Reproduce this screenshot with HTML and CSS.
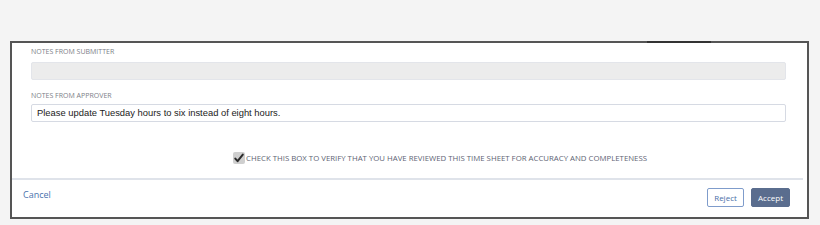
FILE: index.html
```html
<!DOCTYPE html>
<html>
<head>
<meta charset="utf-8">
<link rel="stylesheet" href="styles.css">
</head>
<body>
<div class="frame">
  <span class="tab-mark"></span>
  <div class="fields">
    <div class="label">NOTES FROM SUBMITTER</div>
    <div class="input input-disabled"></div>
    <div class="label label-second">NOTES FROM APPROVER</div>
    <div class="input">Please update Tuesday hours to six instead of eight hours.</div>
  </div>
  <div class="verify">
    <svg class="check" width="12" height="12" viewBox="0 0 12 12">
      <rect x="0" y="0" width="12" height="12" rx="2" fill="#cfcfcf"/>
      <path d="M2.3 6.6 L4.6 9.2 L9.8 2.6" fill="none" stroke="#2a2a2a" stroke-width="2" stroke-linecap="round" stroke-linejoin="round"/>
    </svg>
    <span class="verify-text">CHECK THIS BOX TO VERIFY THAT YOU HAVE REVIEWED THIS TIME SHEET FOR ACCURACY AND COMPLETENESS</span>
  </div>
  <div class="footer">
    <a class="cancel">Cancel</a>
    <div class="actions">
      <button class="btn btn-reject">Reject</button>
      <button class="btn btn-accept">Accept</button>
    </div>
  </div>
</div>
</body>
</html>
```
FILE: styles.css
```css
html, body {
  margin: 0;
  padding: 0;
  background: #f4f4f4;
}
body {
  padding-top: 41px;
  font-family: "Open Sans", "Liberation Sans", sans-serif;
}
.frame {
  position: relative;
  box-sizing: border-box;
  margin-left: 10px;
  width: 799px;
  height: 178px;
  border: 2px solid #555;
  background: #fff;
}
.tab-mark {
  position: absolute;
  top: -2px;
  left: 635px;
  width: 64px;
  height: 2px;
  background: #333;
}
.fields {
  padding: 4px 21px 0 19px;
}
.label {
  font-size: 7px;
  line-height: 10px;
  color: #7c8087;
}
.label-second {
  margin-top: 11px;
}
.input {
  box-sizing: border-box;
  margin-top: 3px;
  height: 18px;
  border: 1px solid #d6dae3;
  border-radius: 2px;
  background: #fff;
  font-family: "Liberation Sans", Arial, sans-serif;
  font-size: 9.4px;
  line-height: 16px;
  padding-left: 5px;
  color: #222;
}
.input-disabled {
  background: #ececec;
  border-color: #e3e5ea;
  margin-top: 5px;
}
.verify {
  display: flex;
  align-items: center;
  padding-left: 221px;
  margin-top: 29px;
  height: 14px;
}
.check {
  display: block;
  margin-right: 1px;
}
.verify-text {
  font-size: 7.8px;
  color: #5e6474;
}
.footer {
  margin-top: 13px;
  margin-right: 4px;
  border-top: 2px solid #dfe3ea;
  display: flex;
  justify-content: space-between;
  align-items: flex-start;
  padding: 8px 13px 0 11px;
}
.cancel {
  margin-top: 1px;
  font-size: 9px;
  line-height: 12px;
  color: #4a72ad;
}
.actions {
  display: flex;
  gap: 7px;
}
.btn {
  box-sizing: border-box;
  height: 19px;
  padding: 0;
  font-family: "Open Sans", "Liberation Sans", sans-serif;
  font-size: 8px;
  border-radius: 2px;
}
.btn-reject {
  width: 37px;
  background: #fff;
  border: 1px solid #7f9ccb;
  color: #4a6fa8;
}
.btn-accept {
  width: 39px;
  background: #5a6d8e;
  border: 1px solid #5a6d8e;
  color: #fff;
}
```
